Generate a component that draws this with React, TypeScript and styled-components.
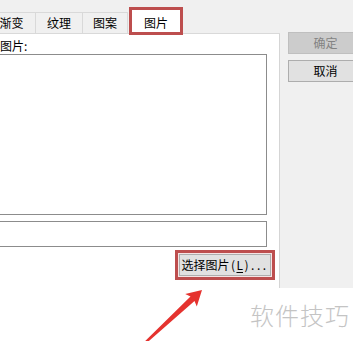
import { createGlobalStyle, styled } from 'styled-components';

const GlobalStyle = createGlobalStyle`
  html, body {
    margin: 0;
    padding: 0;
    background: #fff;
  }
  body {
    font-family: "Noto Sans CJK SC", "Noto Sans", sans-serif;
    font-size: 12px;
    color: #000;
  }
`;

const tabs = [
  { label: '渐变', width: 51 },
  { label: '纹理', width: 48 },
  { label: '图案', width: 46 },
];

const App = () => {
  return (
    <>
      <GlobalStyle />
      <Page>
        <Dialog>
          <TabControl>
            <TabStrip>
              {tabs.map((t) => (
                <Tab key={t.label} $width={t.width}>
                  {t.label}
                </Tab>
              ))}
              <ActiveTab>图片</ActiveTab>
            </TabStrip>
            <TabPage>
              <Label>图片:</Label>
              <Preview />
              <Field />
              <ButtonRow>
                <Highlight>
                  <Button>
                    选择图片<Paren>(</Paren>
                    <u>L</u>
                    <Paren>)</Paren>
                    <Dots>...</Dots>
                  </Button>
                </Highlight>
              </ButtonRow>
            </TabPage>
          </TabControl>
          <SideColumn>
            <Button $disabled $wide>
              确定
            </Button>
            <Button $wide>取消</Button>
          </SideColumn>
        </Dialog>
        <Watermark>软件技巧</Watermark>
        {/* 안내용 빨간 화살표 */}
        <Arrow width="353" height="341" viewBox="0 0 353 341">
          <polygon
            points="202,290 185.2,294 190.5,296.6 139.3,346.8 140.7,348.2 194.5,301 196.8,306.4"
            fill="#e5332f"
          />
        </Arrow>
      </Page>
    </>
  );
};

export default App;

const Page = styled.div`
  position: relative;
  width: 353px;
  height: 341px;
  overflow: hidden;
  background: #fff;
`;

const Dialog = styled.div`
  display: flex;
  height: 288px;
  background: #f0f0f0;
`;

const TabControl = styled.div`
  display: flex;
  flex-direction: column;
  flex-shrink: 0;
  width: 294px;
  margin-left: -14px;
`;

const TabStrip = styled.div`
  display: flex;
  align-items: flex-end;
  height: 34px;
  box-sizing: border-box;
  border-bottom: 1px solid #d9d9d9;
`;

const Tab = styled.div<{ $width: number }>`
  width: ${(p) => p.$width}px;
  height: 21px;
  box-sizing: border-box;
  border: 1px solid #d9d9d9;
  border-bottom: none;
  margin-left: -1px;
  display: flex;
  align-items: center;
  justify-content: center;
  padding-left: ${(p) => (p.$width > 50 ? 2 : 0)}px;
  line-height: 1;
  background: #f0f0f0;
`;

const ActiveTab = styled.div`
  position: relative;
  z-index: 1;
  width: 54px;
  height: 28px;
  margin-left: 1px;
  margin-bottom: -2px;
  box-sizing: border-box;
  border: 3px solid #bd4e4e;
  background: #fff;
  display: flex;
  align-items: center;
  justify-content: center;
  padding-top: 4px;
  line-height: 1;
`;

const TabPage = styled.div`
  flex: 1;
  background: #fff;
  border-right: 1px solid #d5d5d5;
  padding: 5px 12px 0 12px;
  display: flex;
  flex-direction: column;
`;

const Label = styled.div`
  height: 15px;
  line-height: 13px;
  padding-left: 2px;
`;

const Preview = styled.div`
  height: 161px;
  box-sizing: border-box;
  border: 1px solid #8c8c8c;
`;

const Field = styled.div`
  height: 26px;
  margin-top: 6px;
  box-sizing: border-box;
  border: 1px solid #8c8c8c;
`;

const ButtonRow = styled.div`
  display: flex;
  justify-content: flex-end;
  margin-top: 3px;
  margin-right: -8px;
`;

const Highlight = styled.div`
  border: 3px solid #bd4e4e;
  padding: 1px;
  background: #f4e4e4;
`;

const Button = styled.div<{ $disabled?: boolean; $wide?: boolean }>`
  height: 22px;
  width: ${(p) => (p.$wide ? '75px' : '92px')};
  box-sizing: border-box;
  display: flex;
  align-items: center;
  justify-content: center;
  border: 1px solid ${(p) => (p.$disabled ? '#bfbfbf' : '#adadad')};
  background: ${(p) => (p.$disabled ? '#cccccc' : '#e1e1e1')};
  color: ${(p) => (p.$disabled ? '#838383' : '#000')};
  line-height: 1;
  white-space: nowrap;
  u {
    text-underline-offset: 2px;
  }
`;

const Paren = styled.span`
  padding: 0 1.5px;
`;

const Dots = styled.span`
  letter-spacing: 2.5px;
  padding-left: 1px;
`;

const SideColumn = styled.div`
  display: flex;
  flex-direction: column;
  gap: 6px;
  padding: 32px 0 0 8px;
`;

const Watermark = styled.div`
  position: absolute;
  left: 250px;
  top: 299px;
  font-size: 24px;
  font-weight: 300;
  line-height: 32px;
  color: #c4c4c4;
  letter-spacing: 1px;
`;

const Arrow = styled.svg`
  position: absolute;
  left: 0;
  top: 0;
  pointer-events: none;
`;
